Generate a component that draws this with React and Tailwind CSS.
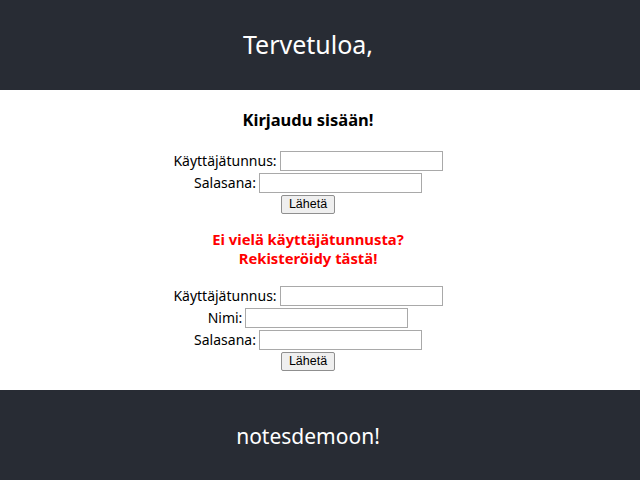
const Row = ({ label }) => (
  <div className="flex items-center justify-center h-[22px]">
    <span className="mr-[3px] leading-[20px]">{label}</span>
    <input className="w-[163px] h-[20px] border border-[#a9a9a9] bg-white outline-none" />
  </div>
);

const SubmitButton = () => (
  <div className="flex justify-center items-start h-[22px] pt-[1px]">
    <button className="h-[19px] px-[7px] text-[12.5px] leading-none bg-[#efefef] border border-[#8f8f8f] rounded-[2px] font-['Liberation_Sans',sans-serif] text-black">
      Lähetä
    </button>
  </div>
);

export default function App() {
  return (
    <div className="w-[640px] h-[480px] flex flex-col font-['Noto_Sans',sans-serif] text-black">
      <header className="h-[90px] bg-[#282c34] flex items-center justify-center pr-6">
        <h1 className="text-[25px] text-white">Tervetuloa, </h1>
      </header>

      <main className="h-[300px] bg-white flex flex-col items-center pr-6 text-[14px]">
        <h2 className="mt-[18px] text-[16.5px] leading-[24px] font-bold">Kirjaudu sisään!</h2>
        <form className="mt-[18px] flex flex-col">
          <Row label="Käyttäjätunnus:" />
          <Row label="Salasana:" />
          <SubmitButton />
        </form>
        <p className="mt-[14px] text-[14.8px] font-bold text-[#ff0000] text-center leading-[19px]">
          Ei vielä käyttäjätunnusta?
          <br />
          Rekisteröidy tästä!
        </p>
        <form className="mt-[17px] flex flex-col">
          <Row label="Käyttäjätunnus:" />
          <Row label="Nimi:" />
          <Row label="Salasana:" />
          <SubmitButton />
        </form>
      </main>

      <footer className="h-[90px] bg-[#282c34] flex items-center justify-center pr-6 pt-[3px]">
        <p className="text-[21px] text-white">notesdemoon!</p>
      </footer>
    </div>
  );
}
